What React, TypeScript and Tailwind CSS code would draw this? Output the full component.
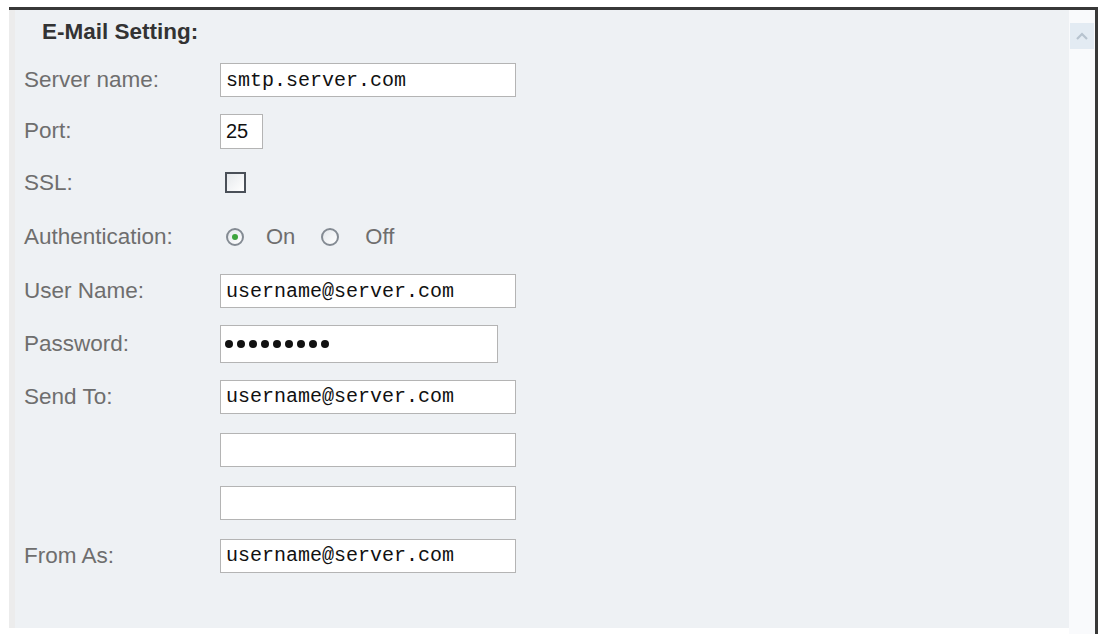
import React from "react";

const sans = { fontFamily: '"Liberation Sans", Arial, sans-serif' };

function Field({
  value,
  w = "w-[296px]",
  h = "h-[34px]",
  mono = true,
}: {
  value: string;
  w?: string;
  h?: string;
  mono?: boolean;
}) {
  return (
    <input
      readOnly
      value={value}
      className={`${w} ${h} border border-[#b4b4b4] bg-white px-[5px] text-[20px] text-[#111] outline-none ${
        mono ? "font-['Liberation_Mono',monospace]" : "font-['Liberation_Sans',sans-serif]"
      }`}
    />
  );
}

function PasswordField({ length }: { length: number }) {
  return (
    <div className="flex h-[38px] w-[278px] items-center gap-[4px] border border-[#b4b4b4] bg-white px-[4px]">
      {Array.from({ length }).map((_, i) => (
        <span key={i} className="h-[8px] w-[8px] rounded-full bg-[#111]" />
      ))}
    </div>
  );
}

function Radio({ checked }: { checked?: boolean }) {
  return (
    <span className="flex h-[18px] w-[18px] items-center justify-center rounded-full border-2 border-[#848b93] bg-gradient-to-br from-[#e4e8ec] to-white">
      {checked && <span className="h-[6px] w-[6px] rounded-full bg-[#3da43d]" />}
    </span>
  );
}

function Row({
  label,
  h,
  children,
}: {
  label?: string;
  h: string;
  children: React.ReactNode;
}) {
  return (
    <div className={`flex items-center ${h}`}>
      <div className="w-[196px] shrink-0 text-[22.5px] text-[#6e6e6e]">{label}</div>
      {children}
    </div>
  );
}

export default function App() {
  return (
    <div className="h-[634px] overflow-hidden bg-white pt-[7px] pl-[9px]" style={sans}>
      <div className="flex h-[627px] border-t-[3px] border-r-[3px] border-[#383838]">
        <div className="flex h-[618px] flex-1 flex-col border-l-[6px] border-[#ececec] bg-[#eef1f4] pl-[9px]">
          <div className="flex h-[44px] items-center pl-[18px] text-[22.5px] font-bold text-[#333]">
            E-Mail Setting:
          </div>
          <Row label="Server name:" h="h-[52px]">
            <Field value="smtp.server.com" />
          </Row>
          <Row label="Port:" h="h-[50px]">
            <Field value="25" w="w-[43px]" h="h-[35px]" mono={false} />
          </Row>
          <Row label="SSL:" h="h-[53px]">
            <span className="ml-[5px] h-[21px] w-[21px] border-2 border-[#4a5058] bg-gradient-to-br from-[#e6e9ec] to-white" />
          </Row>
          <Row label="Authentication:" h="h-[55px]">
            <div className="ml-[6px] flex items-center text-[22px] text-[#6e6e6e]">
              <Radio checked />
              <span className="ml-[22px]">On</span>
              <span className="ml-[26px]">
                <Radio />
              </span>
              <span className="ml-[26px]">Off</span>
            </div>
          </Row>
          <Row label="User Name:" h="h-[54px]">
            <Field value="username@server.com" />
          </Row>
          <Row label="Password:" h="h-[52px]">
            <PasswordField length={9} />
          </Row>
          <Row label="Send To:" h="h-[53px]">
            <Field value="username@server.com" />
          </Row>
          <Row h="h-[53px]">
            <Field value="" />
          </Row>
          <Row h="h-[53px]">
            <Field value="" />
          </Row>
          <Row label="From As:" h="h-[53px]">
            <Field value="username@server.com" />
          </Row>
        </div>
        <div className="flex w-[26px] flex-col items-center bg-[#f9fafc] pt-[13px]">
          <div className="flex h-[26px] w-[24px] items-center justify-center bg-[#e3ebf3]">
            <svg width="14" height="9" viewBox="0 0 14 9">
              <path d="M2 7 L7 2 L12 7" fill="none" stroke="#b7c3cf" strokeWidth="2.2" />
            </svg>
          </div>
        </div>
      </div>
    </div>
  );
}
